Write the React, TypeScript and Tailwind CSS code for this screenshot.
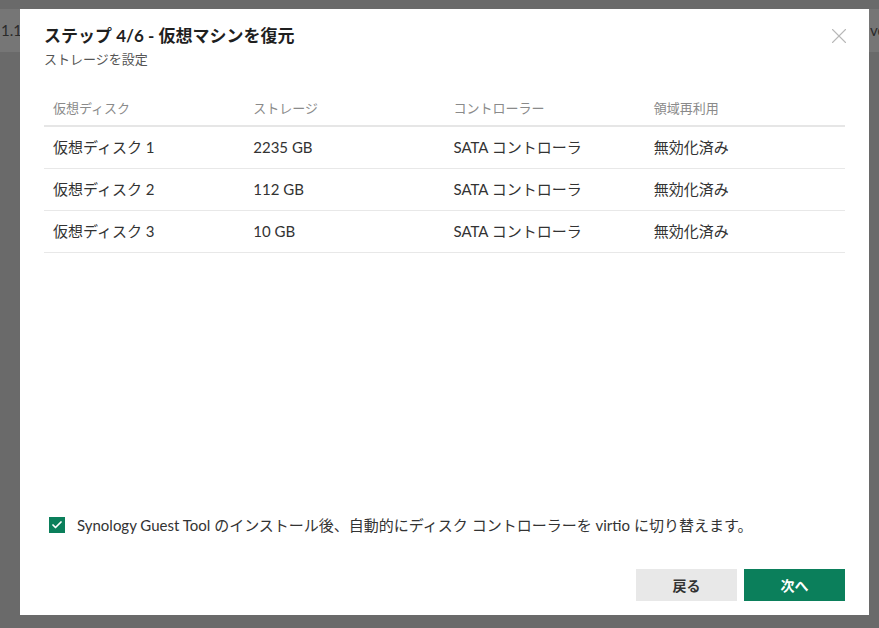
import { Check, X } from "lucide-react";

const disks = [
  { name: "仮想ディスク 1", size: "2235 GB" },
  { name: "仮想ディスク 2", size: "112 GB" },
  { name: "仮想ディスク 3", size: "10 GB" },
];

const font = "font-['Lato','Noto_Sans_CJK_JP',sans-serif]";

const App = () => {
  return (
    <div className={`relative h-[628px] w-[879px] overflow-hidden bg-[#6a6a6a] ${font}`}>
      {/* page behind the overlay */}
      <div className="mt-[9px] flex h-[43px] items-center justify-between bg-[#767676] pl-[1px] pr-0 text-[15px] text-[#2a2a2a]">
        <span>1.1</span>
        <span className="w-[9px] overflow-hidden">ve</span>
      </div>

      {/* modal */}
      <div className="absolute left-[20px] top-[9px] flex h-[606px] w-[849px] flex-col bg-white px-[24px] pb-[14px] pt-[15px]">
        <div className="flex items-start justify-between">
          <div>
            <h1 className="text-[17px] font-bold leading-[24px] text-[#1f1f1f]">
              ステップ 4/6 - 仮想マシンを復元
            </h1>
            <p className="mt-[2px] text-[13px] leading-[18px] text-[#555]">ストレージを設定</p>
          </div>
          <X className="mr-[-7px] mt-[-1px] h-[26px] w-[26px] text-[#b8b8b8]" strokeWidth={1} />
        </div>

        <table className="mt-[19px] w-full table-fixed border-collapse text-left">
          <thead>
            <tr className="border-b-2 border-[#e6e6e6]">
              <th className="h-[39px] w-1/4 pl-[9px] pt-[6px] text-[13px] font-normal text-[#8a8a8a]">仮想ディスク</th>
              <th className="w-1/4 pl-[9px] pt-[6px] text-[13px] font-normal text-[#8a8a8a]">ストレージ</th>
              <th className="w-1/4 pl-[9px] pt-[6px] text-[13px] font-normal text-[#8a8a8a]">コントローラー</th>
              <th className="w-1/4 pl-[9px] pt-[6px] text-[13px] font-normal text-[#8a8a8a]">領域再利用</th>
            </tr>
          </thead>
          <tbody>
            {disks.map((d) => (
              <tr key={d.name} className="border-b border-[#e8e8e8] text-[15px] text-[#333]">
                <td className="h-[42px] pl-[9px]">{d.name}</td>
                <td className="pl-[9px]">{d.size}</td>
                <td className="pl-[9px]">SATA コントローラ</td>
                <td className="pl-[9px]">無効化済み</td>
              </tr>
            ))}
          </tbody>
        </table>

        <div className="flex-1" />

        <label className="flex items-center gap-[12px] pl-[5px] text-[15px] leading-[20px] text-[#333]">
          <span className="flex h-[16px] w-[16px] items-center justify-center bg-[#0b7f5b]">
            <Check className="h-[12px] w-[12px] text-white" strokeWidth={3.5} />
          </span>
          Synology Guest Tool のインストール後、自動的にディスク コントローラーを virtio に切り替えます。
        </label>

        <div className="mt-[34px] flex justify-end gap-[7px]">
          <button className="h-[32px] w-[101px] bg-[#e8e8e8] text-[14px] font-bold text-[#333]">戻る</button>
          <button className="h-[32px] w-[101px] bg-[#0b7f5b] text-[14px] font-bold text-white">次へ</button>
        </div>
      </div>
    </div>
  );
};

export default App;
